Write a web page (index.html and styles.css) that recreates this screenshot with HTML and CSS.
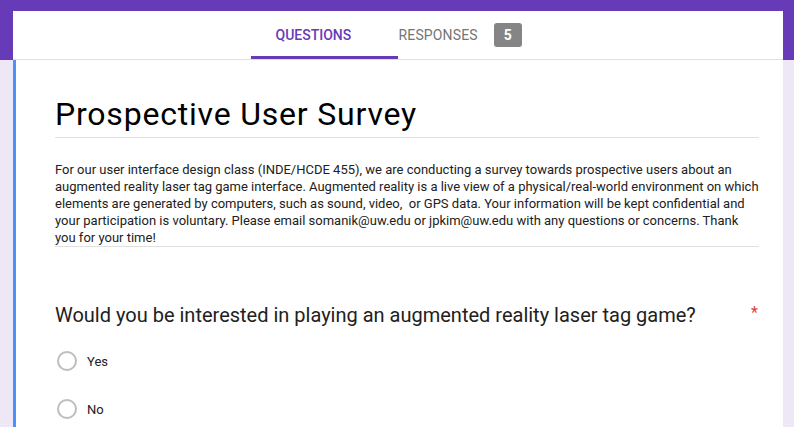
FILE: index.html
```html
<!DOCTYPE html>
<html>
<head>
<meta charset="utf-8">
<link rel="stylesheet" href="styles.css">
</head>
<body>
<header class="top">
  <nav class="tabs">
    <div class="tab tab-active">QUESTIONS</div>
    <div class="tab tab-second">RESPONSES <span class="badge">5</span></div>
  </nav>
</header>
<main class="card">
  <h1 class="title">Prospective User Survey</h1>
  <p class="desc">For our user interface design class (INDE/HCDE 455), we are conducting a survey towards prospective users about an augmented reality laser tag game interface. Augmented reality is a live view of a physical/real-world environment on which elements are generated by computers, such as sound, video,&nbsp; or GPS data. Your information will be kept confidential and your participation is voluntary. Please email somanik@uw.edu or jpkim@uw.edu with any questions or concerns. Thank you for your time!</p>
  <div class="question">
    <div class="q-text">Would you be interested in playing an augmented reality laser tag game?</div>
    <div class="req">*</div>
  </div>
  <div class="option"><span class="radio"></span><span class="label">Yes</span></div>
  <div class="option"><span class="radio"></span><span class="label">No</span></div>
</main>
</body>
</html>
```
FILE: styles.css
```css
html, body {
  margin: 0;
  padding: 0;
}
body {
  background: #ede7f6;
  font-family: Roboto, "Liberation Sans", Arial, sans-serif;
  height: 427px;
  overflow: hidden;
}
.top {
  background: #673ab7;
  padding: 11px 11px 0 13px;
}
.tabs {
  background: #fff;
  height: 48px;
  border-bottom: 1px solid #e0e0e0;
  display: flex;
  justify-content: center;
}
.tab {
  width: 147px;
  box-sizing: border-box;
  display: flex;
  align-items: center;
  font-size: 14px;
  font-weight: 500;
  color: #757575;
}
.tab-active {
  color: #673ab7;
  border-bottom: 3px solid #673ab7;
  padding-top: 3px;
  padding-left: 25px;
  margin-left: -1px;
}
.tab-second {
  padding-left: 1px;
  font-weight: 400;
  letter-spacing: 0.15px;
}
.badge {
  display: inline-flex;
  align-items: center;
  justify-content: center;
  width: 28px;
  height: 24px;
  margin-left: 16px;
  background: #858585;
  color: #fff;
  border-radius: 3px;
  font-weight: 700;
  font-size: 14px;
}
.card {
  background: #fff;
  margin: 0 11px 0 13px;
  border-left: 3px solid #4d90fe;
  padding: 34px 24px 0 39px;
  height: 367px;
  box-sizing: border-box;
  overflow: hidden;
}
.title {
  margin: 0;
  font-size: 32px;
  font-weight: 400;
  letter-spacing: 0.8px;
  line-height: 40px;
  color: #000;
  padding-bottom: 3px;
  border-bottom: 1px solid #e0e0e0;
}
.desc {
  margin: 23px 0 0 0;
  font-size: 13px;
  line-height: 17px;
  color: #212121;
  border-bottom: 1px solid #e0e0e0;
}
.question {
  margin-top: 56px;
  display: flex;
  justify-content: space-between;
  align-items: flex-start;
}
.q-text {
  font-size: 20px;
  line-height: 24px;
  color: #212121;
}
.req {
  color: #db4437;
  font-size: 16px;
  line-height: 16px;
  margin-top: 2px;
  padding-right: 1px;
}
.option {
  display: flex;
  align-items: center;
  height: 20px;
  margin-top: 24px;
  padding-left: 2px;
}
.option + .option {
  margin-top: 28px;
}
.radio {
  width: 20px;
  height: 20px;
  box-sizing: border-box;
  border: 2px solid #bdbdbd;
  border-radius: 50%;
}
.label {
  margin-left: 10px;
  font-size: 13px;
  color: #212121;
}
```
